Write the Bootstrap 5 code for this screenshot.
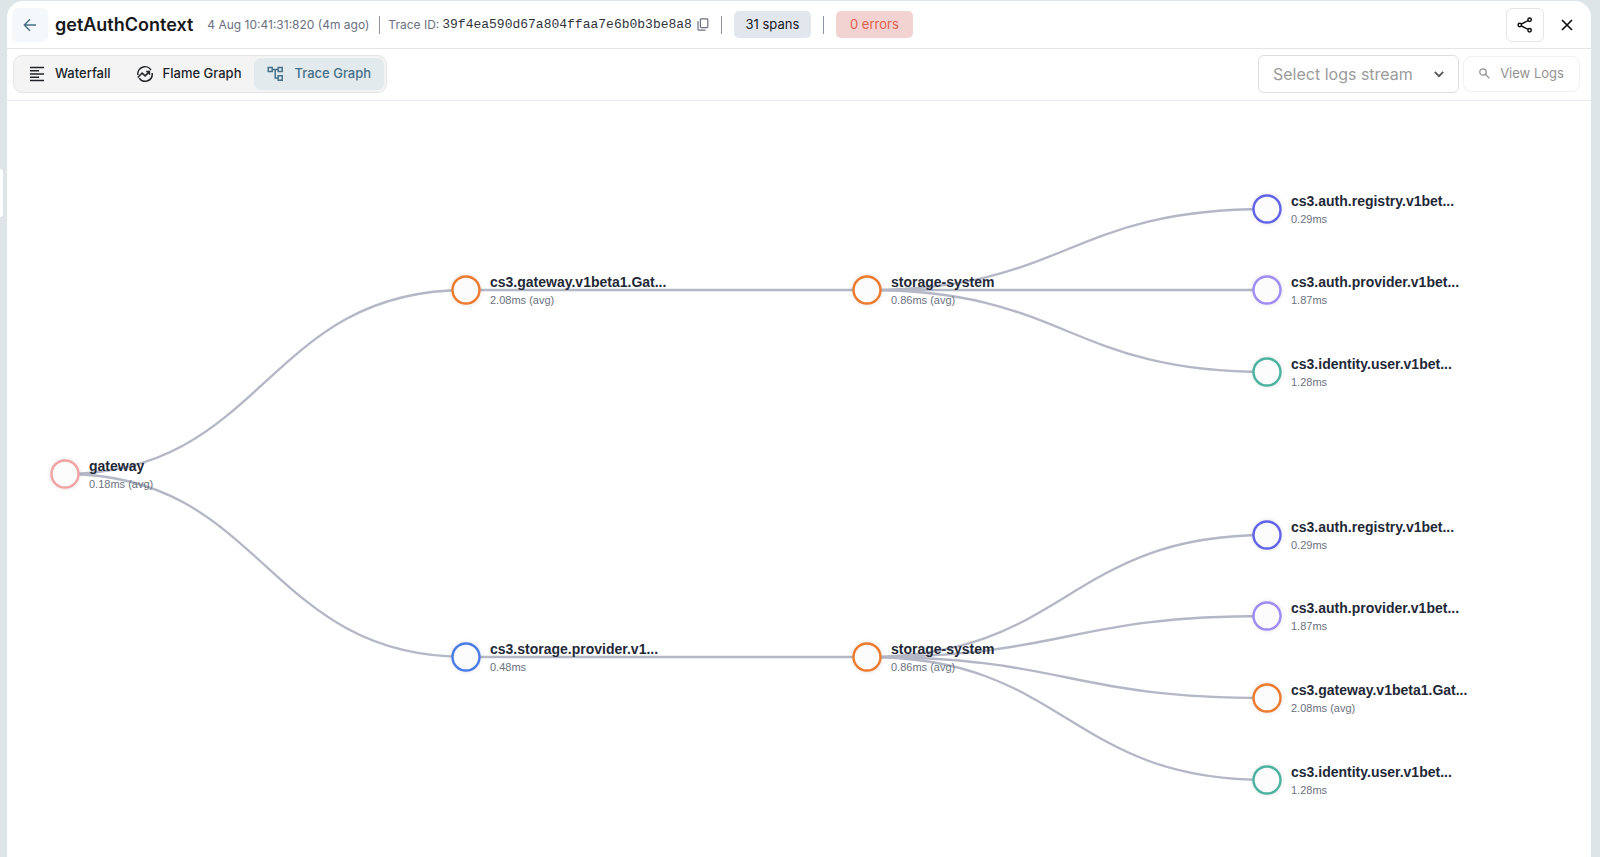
<!DOCTYPE html>
<html lang="en">
<head>
<meta charset="utf-8">
<meta name="viewport" content="width=device-width, initial-scale=1">
<title>getAuthContext</title>
<link href="https://cdn.jsdelivr.net/npm/bootstrap@5.3.0/dist/css/bootstrap.min.css" rel="stylesheet">
<style>
body { background: #dde5e8; font-family: Inter, "Liberation Sans", sans-serif; font-size: 14px; color: #16181c; }
.trace-panel { margin: 1px 9px 0 7px; background: #fff; border-radius: 16px 16px 0 0; }
.edge-tab { left: 0; top: 169px; width: 3px; height: 48px; background: #fff; border-radius: 0 4px 4px 0; }
.trace-head { height: 48px; padding: 0 6px 0 5px; border-bottom: 1px solid #e4e4e6; }
.tool-row { height: 52px; padding: 0 11px 2px 6px; border-bottom: 1px solid #e9ebf0; }
.icon-button { height: 34px; padding: 0; border-radius: 6px; --bs-btn-color: #111; }
.back { width: 36px; margin-right: 7px; background: #f5f8fa; --bs-btn-color: #467089; }
.title { font-size: 18px; line-height: 24px; font-weight: 600; margin-right: 14px; }
.meta { font-size: 12px; color: #6b7080; }
.trace-id { font-family: "Liberation Mono", monospace; font-size: 13px; color: #30343a; margin: 0 5px 0 3px; }
.rule { width: 1px; height: 18px; margin: 0 12px; background: #8f92a3; }
.rule-start { margin: 0 8px 0 10px; }
.chip { height: 27px; width: 77px; border-radius: 5px; font-size: 13px; background: #e2e7ee; }
.chip-error { background: #f3d3d2; color: #e0604f; }
.share { width: 38px; border: 1px solid #e4e4e6; }
.close-it { width: 36px; margin-left: 5px; }
.tabs-box { height: 38px; padding: 2px; background: #f4f4f4; border: 1px solid #e5e5e5; border-radius: 9px; }
.tab-item { height: 32px; padding: 0 13px; gap: 10px; font-size: 13px; font-weight: 500; border: 0; border-radius: 7px; white-space: nowrap; }
.tab-item.active { background: #e3eaee !important; color: #467089 !important; }
.stream { width: 201px; height: 38px; padding: 0 40px 0 14px; font-size: 16px; color: #9b9b9b; border: 1px solid #dedede; border-radius: 6px; --bs-form-select-bg-img: none; }
.stream-arrow { right: 14px; top: 13px; pointer-events: none; }
.view-logs { height: 36px; width: 117px; gap: 10px; font-size: 13px; border-radius: 8px; --bs-btn-disabled-color: #929292; --bs-btn-disabled-opacity: 1; --bs-btn-disabled-border-color: #f0f0f0; }
.graph { font-family: "Liberation Sans", sans-serif; }
.links { fill: none; stroke: #b3b7c6; }
.nodes circle { fill: #fcfcfc; filter: drop-shadow(0 0 2px rgba(0,0,0,.12)); }
.node-name { font-size: 14px; font-weight: 700; fill: #1f2937; }
.node-time { font-size: 11px; fill: #6b7280; }
</style>
</head>
<body class="overflow-hidden">
<div class="edge-tab position-absolute"></div>
<main class="trace-panel min-vh-100">
  <header class="trace-head d-flex align-items-center">
    <button class="btn icon-button back d-flex align-items-center justify-content-center" aria-label="Back">
      <svg width="14" height="14" viewBox="0 0 14 14" fill="none" stroke="currentColor" stroke-width="1.4"><path d="M13 7H1.5M7 1.3 1.3 7 7 12.7"/></svg>
    </button>
    <h1 class="title mb-0">getAuthContext</h1>
    <span class="meta">4 Aug 10:41:31:820 (4m ago)</span>
    <span class="rule rule-start"></span>
    <span class="meta">Trace ID:</span>
    <span class="trace-id">39f4ea590d67a804ffaa7e6b0b3be8a8</span>
    <button class="btn p-0 border-0 d-flex" aria-label="Copy trace ID">
      <svg width="12" height="13" viewBox="0 0 12 13" fill="none" stroke="#6b7080" stroke-width="1.2"><rect x="3.4" y=".8" width="7.4" height="8.8" rx=".8"/><path d="M1 3.2v8.2q0 .8.8.8h6.8"/></svg>
    </button>
    <span class="rule"></span>
    <span class="chip d-flex align-items-center justify-content-center">31 spans</span>
    <span class="rule"></span>
    <span class="chip chip-error d-flex align-items-center justify-content-center">0 errors</span>
    <button class="btn icon-button share ms-auto d-flex align-items-center justify-content-center" aria-label="Share">
      <svg width="16" height="16" viewBox="0 0 16 16" fill="none" stroke="currentColor" stroke-width="1.5"><circle cx="12.6" cy="2.8" r="1.7"/><circle cx="2.8" cy="8" r="1.7"/><circle cx="12.6" cy="13.2" r="1.7"/><path d="m4.3 7.2 6.8-3.6M4.3 8.8l6.8 3.6"/></svg>
    </button>
    <button class="btn icon-button close-it border-0 d-flex align-items-center justify-content-center" aria-label="Close">
      <svg width="12" height="12" viewBox="0 0 12 12" stroke="currentColor" stroke-width="1.7"><path d="m1 1 10 10M11 1 1 11"/></svg>
    </button>
  </header>

  <div class="tool-row d-flex align-items-center">
    <div class="tabs-box d-flex" role="tablist">
      <button class="btn tab-item d-flex align-items-center" role="tab">
        <svg width="16" height="16" viewBox="0 0 16 16" stroke="currentColor" stroke-width="1.5"><path d="M1 1.5h14M1 4.8h9M1 8h14M1 11.2h9M1 14.5h14"/></svg>Waterfall
      </button>
      <button class="btn tab-item d-flex align-items-center" role="tab">
        <svg width="16" height="16" viewBox="0 0 16 16" fill="none" stroke="currentColor" stroke-width="1.5"><path d="M.9 9A7.1 7.1 0 0 1 14 4.2M15.1 7A7.1 7.1 0 0 1 2.2 12.1M.8 11.5l4.3-4.4 3 2.8 4-4M9.2 5.6h3.2v3.2"/></svg>Flame Graph
      </button>
      <button class="btn tab-item active d-flex align-items-center" role="tab" aria-selected="true">
        <svg width="17" height="16" viewBox="0 0 17 16" fill="none" stroke="currentColor" stroke-width="1.5"><path d="M1.2 1.5h4v4h-4zM11.2 1.5h4v4h-4zM11.2 9.8h4v4.4h-4zM5.2 3.5h6M8.2 3.5V12h3"/></svg>Trace Graph
      </button>
    </div>
    <div class="position-relative ms-auto">
      <select class="form-select stream" aria-label="Logs stream"><option>Select logs stream</option></select>
      <svg class="stream-arrow position-absolute" width="12" height="12" viewBox="0 0 12 12" fill="none" stroke="#555" stroke-width="1.7"><path d="m1.8 3.8 4.2 4.4 4.2-4.4"/></svg>
    </div>
    <button class="btn view-logs ms-1 p-0 d-flex align-items-center justify-content-center" disabled>
      <svg width="11" height="11" viewBox="0 0 11 11" fill="none" stroke="currentColor" stroke-width="1.3"><circle cx="4" cy="4" r="3.2"/><path d="m6.4 6.4 4 4"/></svg>View Logs
    </button>
  </div>

  <svg class="graph d-block w-100" viewBox="0 0 1584 756" role="img" aria-label="Trace graph">
    <g class="links" stroke-width="2.3">
      <path d="M58 373C258 373 258 189 459 189"/>
      <path d="M58 373C258 373 258 556 459 556"/>
      <path d="M459 189H860"/>
      <path d="M459 556H860"/>
      <path d="M860 189C1060 189 1060 108 1260 108"/>
      <path d="M860 189H1260"/>
      <path d="M860 189C1060 189 1060 271 1260 271"/>
      <path d="M860 556C1060 556 1060 434 1260 434"/>
      <path d="M860 556C1060 556 1060 515 1260 515"/>
      <path d="M860 556C1060 556 1060 597 1260 597"/>
      <path d="M860 556C1060 556 1060 679 1260 679"/>
    </g>
    <g class="nodes">
      <g transform="translate(58 373)"><circle r="13.5" stroke-width="2.4" stroke="#f2a3a3"/><text class="node-name" x="24" y="-3">gateway</text><text class="node-time" x="24" y="14">0.18ms (avg)</text></g>
      <g transform="translate(459 189)"><circle r="13.5" stroke-width="2.4" stroke="#ed7a2d"/><text class="node-name" x="24" y="-3">cs3.gateway.v1beta1.Gat...</text><text class="node-time" x="24" y="14">2.08ms (avg)</text></g>
      <g transform="translate(459 556)"><circle r="13.5" stroke-width="2.4" stroke="#4a7ce8"/><text class="node-name" x="24" y="-3">cs3.storage.provider.v1...</text><text class="node-time" x="24" y="14">0.48ms</text></g>
      <g transform="translate(860 189)"><circle r="13.5" stroke-width="2.4" stroke="#ed7a2d"/><text class="node-name" x="24" y="-3">storage-system</text><text class="node-time" x="24" y="14">0.86ms (avg)</text></g>
      <g transform="translate(860 556)"><circle r="13.5" stroke-width="2.4" stroke="#ed7a2d"/><text class="node-name" x="24" y="-3">storage-system</text><text class="node-time" x="24" y="14">0.86ms (avg)</text></g>
      <g transform="translate(1260 108)"><circle r="13.5" stroke-width="2.4" stroke="#6163e8"/><text class="node-name" x="24" y="-3">cs3.auth.registry.v1bet...</text><text class="node-time" x="24" y="14">0.29ms</text></g>
      <g transform="translate(1260 189)"><circle r="13.5" stroke-width="2.4" stroke="#a18bf5"/><text class="node-name" x="24" y="-3">cs3.auth.provider.v1bet...</text><text class="node-time" x="24" y="14">1.87ms</text></g>
      <g transform="translate(1260 271)"><circle r="13.5" stroke-width="2.4" stroke="#4bb3a1"/><text class="node-name" x="24" y="-3">cs3.identity.user.v1bet...</text><text class="node-time" x="24" y="14">1.28ms</text></g>
      <g transform="translate(1260 434)"><circle r="13.5" stroke-width="2.4" stroke="#6163e8"/><text class="node-name" x="24" y="-3">cs3.auth.registry.v1bet...</text><text class="node-time" x="24" y="14">0.29ms</text></g>
      <g transform="translate(1260 515)"><circle r="13.5" stroke-width="2.4" stroke="#a18bf5"/><text class="node-name" x="24" y="-3">cs3.auth.provider.v1bet...</text><text class="node-time" x="24" y="14">1.87ms</text></g>
      <g transform="translate(1260 597)"><circle r="13.5" stroke-width="2.4" stroke="#ed7a2d"/><text class="node-name" x="24" y="-3">cs3.gateway.v1beta1.Gat...</text><text class="node-time" x="24" y="14">2.08ms (avg)</text></g>
      <g transform="translate(1260 679)"><circle r="13.5" stroke-width="2.4" stroke="#4bb3a1"/><text class="node-name" x="24" y="-3">cs3.identity.user.v1bet...</text><text class="node-time" x="24" y="14">1.28ms</text></g>
    </g>
  </svg>
</main>
<script src="https://cdn.jsdelivr.net/npm/bootstrap@5.3.0/dist/js/bootstrap.bundle.min.js"></script>
</body>
</html>
